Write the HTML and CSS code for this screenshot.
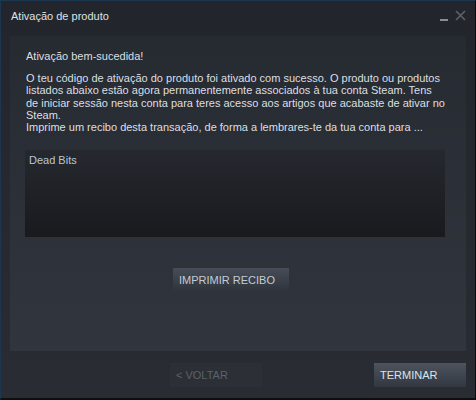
FILE: index.html
```html
<!DOCTYPE html>
<html lang="pt">
<head>
<meta charset="utf-8">
<title>Ativação de produto</title>
<link rel="stylesheet" href="styles.css">
</head>
<body>
<div class="window">
  <div class="titlebar">
    <span class="title">Ativação de produto</span>
    <div class="controls">
      <span class="min"></span>
      <svg class="close" width="11" height="11" viewBox="0 0 11 11"><path d="M1 1L10 10M10 1L1 10" stroke="#5e6167" stroke-width="1.6"/></svg>
    </div>
  </div>
  <div class="panel">
    <p class="headline">Ativação bem-sucedida!</p>
    <p class="body">O teu código de ativação do produto foi ativado com sucesso. O produto ou produtos listados abaixo estão agora permanentemente associados à tua conta Steam. Tens de iniciar sessão nesta conta para teres acesso aos artigos que acabaste de ativar no Steam.<br>Imprime um recibo desta transação, de forma a lembrares-te da tua conta para ...</p>
    <div class="list">
      <div class="item">Dead Bits</div>
    </div>
    <div class="print-row">
      <button class="btn print">IMPRIMIR RECIBO</button>
    </div>
  </div>
  <div class="footer">
    <button class="btn back">&lt; VOLTAR</button>
    <button class="btn finish">TERMINAR</button>
  </div>
</div>
</body>
</html>
```

FILE: styles.css
```css
* { box-sizing: border-box; }
html, body { margin: 0; padding: 0; background: #000; }
body { font-family: "Liberation Sans", Arial, sans-serif; }

.window {
  width: 476px;
  height: 400px;
  background: linear-gradient(#22252b, #292c32);
  border-left: 1px solid #1c3652;
  border-top: 1px solid #1c3652;
  border-right: 1px solid #0c0d0f;
  border-bottom: 2px solid #0e0f11;
  display: flex;
  flex-direction: column;
}

.titlebar {
  height: 35px;
  display: flex;
  align-items: flex-start;
  justify-content: space-between;
  padding: 8px 9px 0 10px;
}
.title {
  font-size: 11px;
  color: #dfe2e5;
  line-height: 14px;
}
.controls {
  display: flex;
  align-items: flex-start;
  gap: 7px;
  padding-top: 1px;
}
.min {
  display: block;
  width: 8px;
  height: 2px;
  background: #8a8d92;
  margin-top: 9px;
}
.close { display: block; }

.panel {
  margin: 0 9px;
  height: 315px;
  background: linear-gradient(#262a31, #31353d);
  padding: 13px 21px 0 15px;
  display: flex;
  flex-direction: column;
}
.headline {
  margin: 0 0 0 1px;
  font-size: 11px;
  line-height: 14px;
  color: #dcdfe2;
}
.body {
  margin: 9px 0 0 1px;
  font-size: 11px;
  line-height: 12.3px;
  color: #dcdfe2;
}
.list {
  margin-top: 15px;
  height: 89px;
  background: linear-gradient(#25282e, #181a1e);
  border-top: 2px solid #2a2d33;
  padding: 3px 4px;
}
.item {
  font-size: 11px;
  line-height: 14px;
  color: #b9c6d3;
}
.print-row {
  display: flex;
  justify-content: center;
  margin-top: 31px;
}
.btn {
  font-family: "Liberation Sans", Arial, sans-serif;
  font-size: 11px;
  border: none;
  height: 24px;
  padding: 0 6px;
  text-align: left;
  margin: 0;
}
.print {
  width: 116px;
  height: 23px;
  margin-left: -8px;
  background: linear-gradient(#474d57, #2f343c);
  color: #c3ccd5;
}
.footer {
  display: flex;
  justify-content: flex-end;
  gap: 112px;
  padding: 12px 9px 0 0;
}
.back {
  width: 92px;
  background: #2c2f35;
  color: #5d626a;
}
.finish {
  width: 92px;
  background: linear-gradient(#4d545e, #323740);
  color: #dfe3e7;
}
```
